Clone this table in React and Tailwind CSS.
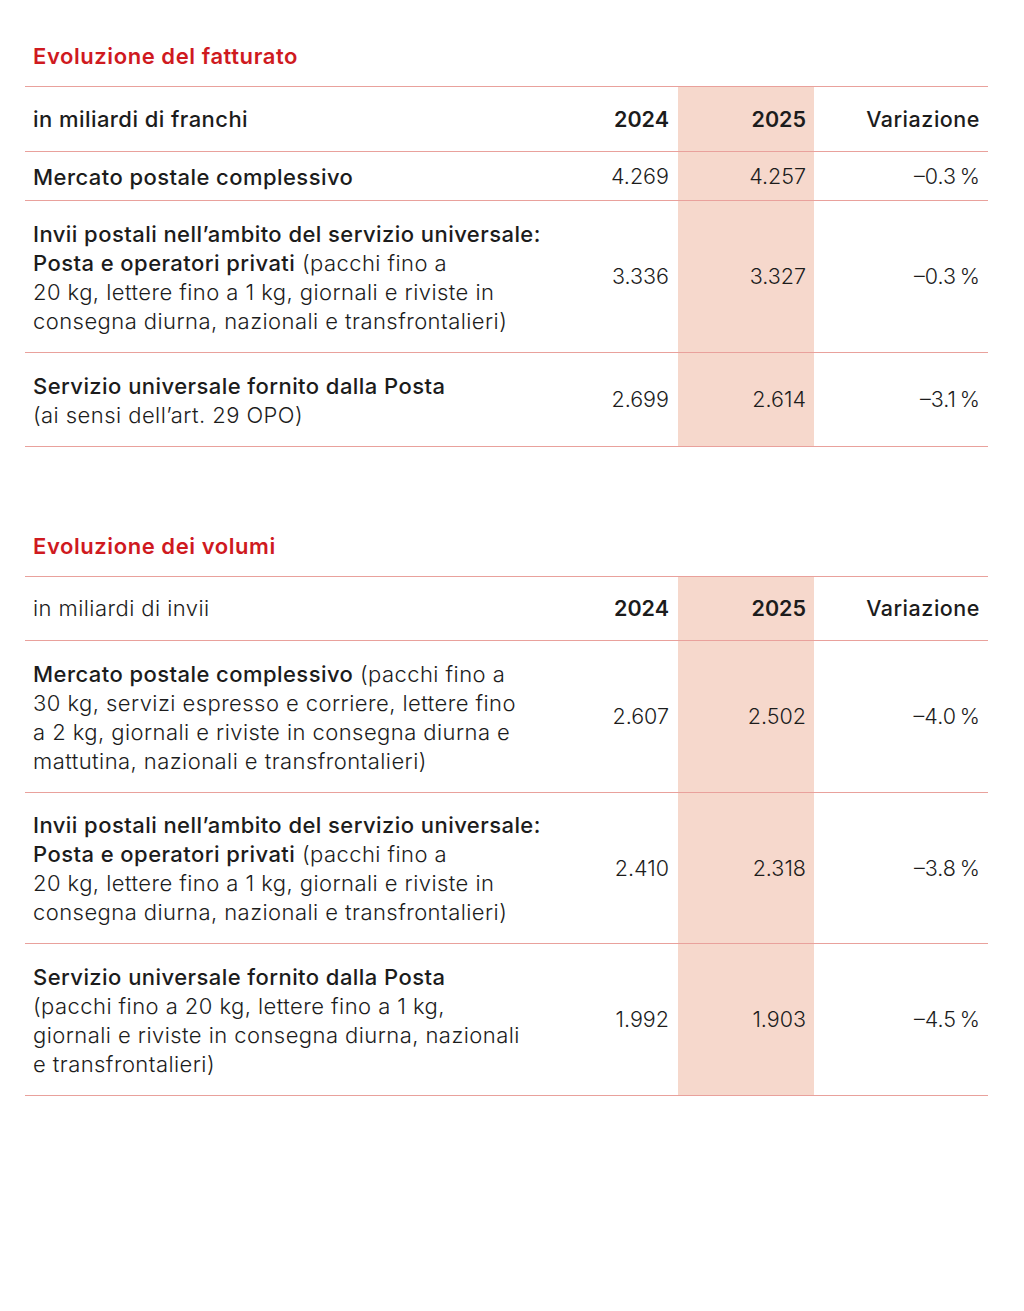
const FONT = "font-['Inter','Noto_Sans',sans-serif]"

const INVII = [
  [['b', 'Invii postali nell’ambito del servizio universale:']],
  [['b', 'Posta e operatori privati'], ['l', ' (pacchi fino a']],
  [['l', '20 kg, lettere fino a 1 kg, giornali e riviste in']],
  [['l', 'consegna diurna, nazionali e transfrontalieri)']],
]

const fatturato = {
  title: 'Evoluzione del fatturato',
  unit: 'in miliardi di franchi',
  unitBold: true,
  head: 'h-[65px]',
  rows: [
    { lines: [[['b', 'Mercato postale complessivo']]], a: '4.269', b: '4.257', v: '–0.3\u202f%', h: 'h-[49px]' },
    { lines: INVII, a: '3.336', b: '3.327', v: '–0.3\u202f%', h: 'h-[152px]' },
    {
      lines: [
        [['b', 'Servizio universale fornito dalla Posta']],
        [['l', '(ai sensi dell’art. 29 OPO)']],
      ],
      a: '2.699', b: '2.614', v: '–3.1\u202f%', h: 'h-[94px]',
    },
  ],
}

const volumi = {
  title: 'Evoluzione dei volumi',
  unit: 'in miliardi di invii',
  unitBold: false,
  head: 'h-[64px]',
  rows: [
    {
      lines: [
        [['b', 'Mercato postale complessivo'], ['l', ' (pacchi fino a']],
        [['l', '30 kg, servizi espresso e corriere, lettere fino']],
        [['l', 'a 2 kg, giornali e riviste in consegna diurna e']],
        [['l', 'mattutina, nazionali e transfrontalieri)']],
      ],
      a: '2.607', b: '2.502', v: '–4.0\u202f%', h: 'h-[152px]',
    },
    { lines: INVII, a: '2.410', b: '2.318', v: '–3.8\u202f%', h: 'h-[151px]' },
    {
      lines: [
        [['b', 'Servizio universale fornito dalla Posta']],
        [['l', '(pacchi fino a 20 kg, lettere fino a 1 kg,']],
        [['l', 'giornali e riviste in consegna diurna, nazionali']],
        [['l', 'e transfrontalieri)']],
      ],
      a: '1.992', b: '1.903', v: '–4.5\u202f%', h: 'h-[152px]',
    },
  ],
}

const LINE = 'border-b-[1.5px] border-[#e9a19c]'
const HL = 'bg-[#f6d8cc]'

function Label({ lines }) {
  return (
    <div className="pl-2 pt-[2px] text-[22px] tracking-[0.02em]">
      {lines.map((line, i) => (
        <div key={i} className="whitespace-nowrap">
          {line.map(([w, t], j) => (
            <span key={j} className={w === 'b' ? 'font-medium' : 'font-light'}>{t}</span>
          ))}
        </div>
      ))}
    </div>
  )
}

function Table({ data }) {
  const hd = `${LINE} ${data.head} flex items-center`
  return (
    <section>
      <h2 className="px-2 text-[22px] tracking-[0.026em] leading-[29px] font-semibold text-[#cf1a1f] mb-[15px]">
        {data.title}
      </h2>
      <div className="grid grid-cols-[517px_136px_136px_174px] border-t-[1.5px] border-[#e9a19c] text-[21.5px] leading-[29px] text-[#1c1c1c]">
        {/* header */}
        <div className={`${hd} pl-2 text-[22px] tracking-[0.02em] ${data.unitBold ? 'font-medium' : 'font-light'}`}>
          {data.unit}
        </div>
        <div className={`${hd} justify-end pr-[9px] font-semibold`}>2024</div>
        <div className={`${hd} ${HL} justify-end pr-2 font-semibold`}>2025</div>
        <div className={`${hd} justify-end pr-2 font-medium tracking-[0.025em]`}>Variazione</div>

        {data.rows.map((r, i) => {
          const cell = `${LINE} ${r.h} flex items-center`
          return [
            <div key={`l${i}`} className={cell}>
              <Label lines={r.lines} />
            </div>,
            <div key={`a${i}`} className={`${cell} pr-[9px] justify-end font-light`}>
              {r.a}
            </div>,
            <div key={`b${i}`} className={`${cell} ${HL} pr-2 justify-end font-light`}>
              {r.b}
            </div>,
            <div key={`v${i}`} className={`${cell} pr-2 justify-end font-light`}>
              {r.v}
            </div>,
          ]
        })}
      </div>
    </section>
  )
}

export default function App() {
  return (
    <div className={`${FONT} min-h-[1311px] bg-white pl-[25px] pr-[36px] pt-[42px]`}>
      <Table data={fatturato} />
      <div className="h-[85px]" />
      <Table data={volumi} />
    </div>
  )
}
